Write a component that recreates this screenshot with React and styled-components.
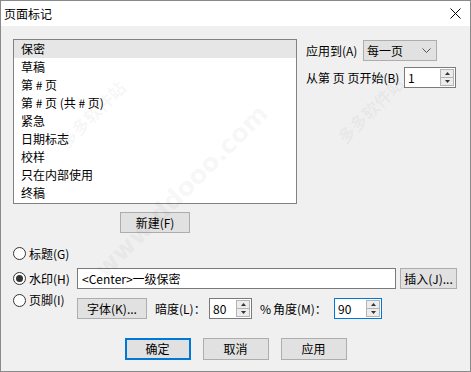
import React from 'react';
import styled, { createGlobalStyle } from 'styled-components';

const Global = createGlobalStyle`
  html, body { margin: 0; padding: 0; background: #ffffff; }
  body {
    font-family: "Noto Sans CJK SC", "Microsoft YaHei", sans-serif;
    font-size: 12px;
    color: #000;
  }
  * { box-sizing: border-box; }
`;

const Window = styled.div`
  position: relative;
  width: 471px;
  height: 372px;
  border: 1px solid #8a8a8a;
  background: #f0f0f0;
  display: flex;
  flex-direction: column;
  overflow: hidden;
`;

const TitleBar = styled.div`
  height: 25px;
  flex: none;
  background: #ffffff;
  display: flex;
  align-items: center;
  justify-content: space-between;
  padding: 0 9px 0 3px;
  font-size: 12px;
  line-height: 16px;
`;

const Body = styled.div`
  flex: 1;
  display: flex;
  flex-direction: column;
  padding: 13px 12px 0 12px;
`;

const Top = styled.div`
  display: flex;
  align-items: flex-start;
`;

const ListBox = styled.div`
  width: 284px;
  height: 165px;
  border: 1px solid #828282;
  background: #ffffff;
`;

const ListItem = styled.div`
  height: 18px;
  line-height: 18px;
  padding-left: 7px;
  background: ${p => (p.$selected ? '#e6e6e6' : 'transparent')};
  white-space: nowrap;
`;

const RightCol = styled.div`
  margin-left: 9px;
  padding-top: 1px;
  display: flex;
  flex-direction: column;
  gap: 6px;
`;

const FormRow = styled.div`
  display: flex;
  align-items: center;
  height: 21px;
`;

const FieldLabel = styled.span`
  width: ${p => p.$w}px;
  margin-left: ${p => p.$ml || 0}px;
  flex: none;
  white-space: nowrap;
  line-height: 16px;
`;

const Select = styled.div`
  width: ${p => p.$w}px;
  height: 21px;
  border: 1px solid #adadad;
  background: #e1e1e1;
  display: flex;
  align-items: center;
  justify-content: space-between;
  padding: 0 5px 0 3px;
  line-height: 16px;
`;

const SpinBox = styled.div`
  width: ${p => p.$w}px;
  height: 21px;
  flex: none;
  border: 1px solid ${p => (p.$focused ? '#0078d7' : '#7a7a7a')};
  background: #ffffff;
  display: flex;
`;

const SpinValue = styled.div`
  flex: 1;
  padding-left: 3px;
  line-height: 19px;
`;

const SpinButtons = styled.div`
  width: 15px;
  flex: none;
  padding: 1px 1px 1px 0;
  display: flex;
  flex-direction: column;
`;

const SpinHalf = styled.div`
  flex: 1;
  border: 1px solid #b4b4b4;
  border-top-width: ${p => (p.$down ? 0 : 1)}px;
  background: #ececec;
  display: flex;
  align-items: center;
  justify-content: center;
`;

const Button = styled.button`
  width: ${p => p.$w}px;
  height: ${p => p.$h || 21}px;
  flex: none;
  margin-left: ${p => p.$ml || 0}px;
  border: ${p => (p.$default ? '2px solid #0078d7' : '1px solid #adadad')};
  background: #e1e1e1;
  font-family: inherit;
  font-size: 12px;
  line-height: 16px;
  color: #000;
  padding: 0;
  display: flex;
  align-items: center;
  justify-content: center;
`;

const NewRow = styled.div`
  width: 284px;
  margin-top: 8px;
  display: flex;
  justify-content: center;
`;

const RadioSection = styled.div`
  margin-top: 10px;
  display: flex;
  flex-direction: column;
  gap: 4px;
`;

const RadioRow = styled.div`
  display: flex;
  align-items: ${p => (p.$top ? 'flex-start' : 'center')};
  min-height: 21px;
`;

const RadioLabel = styled.label`
  width: 64px;
  flex: none;
  display: flex;
  align-items: center;
  gap: 3px;
  line-height: 14px;
  white-space: nowrap;
`;

const RadioCircle = styled.span`
  width: 13px;
  height: 13px;
  border-radius: 50%;
  border: 1px solid #333333;
  background: #ffffff;
  display: flex;
  align-items: center;
  justify-content: center;
  flex: none;
  &::after {
    content: '';
    width: 7px;
    height: 7px;
    border-radius: 50%;
    background: ${p => (p.$checked ? '#333333' : 'transparent')};
  }
`;

const TextInput = styled.div`
  width: 319px;
  height: 21px;
  border: 1px solid #7a7a7a;
  background: #ffffff;
  padding-left: 4px;
  line-height: 19px;
  white-space: nowrap;
`;

const Controls = styled.div`
  display: flex;
  align-items: center;
  margin-top: 5px;
`;

const Footer = styled.div`
  margin-top: 19px;
  display: flex;
  justify-content: center;
  gap: 12px;
`;

const Watermark = styled.div`
  position: absolute;
  left: ${p => p.$x}px;
  top: ${p => p.$y}px;
  transform: rotate(-45deg);
  transform-origin: left top;
  color: rgba(0, 0, 0, 0.055);
  font-family: ${p => (p.$latin ? '"DejaVu Sans", sans-serif' : '"Noto Sans CJK SC", sans-serif')};
  font-weight: bold;
  font-size: ${p => p.$size}px;
  white-space: nowrap;
  pointer-events: none;
`;

const CloseIcon = () => (
  <svg width="11" height="11" viewBox="0 0 11 11">
    <path d="M0.5 0.5 L10.5 10.5 M10.5 0.5 L0.5 10.5" stroke="#000" strokeWidth="1" fill="none" />
  </svg>
);

const Chevron = () => (
  <svg width="9" height="5" viewBox="0 0 9 5">
    <path d="M0.5 0.5 L4.5 4.5 L8.5 0.5" stroke="#555" strokeWidth="1" fill="none" />
  </svg>
);

const Arrow = ({ down }) => (
  <svg width="5" height="3" viewBox="0 0 5 3">
    <path d={down ? 'M0 0 L5 0 L2.5 3 Z' : 'M0 3 L5 3 L2.5 0 Z'} fill="#333" />
  </svg>
);

const Spin = ({ w, value, focused }) => (
  <SpinBox $w={w} $focused={focused}>
    <SpinValue>{value}</SpinValue>
    <SpinButtons>
      <SpinHalf><Arrow /></SpinHalf>
      <SpinHalf $down><Arrow down /></SpinHalf>
    </SpinButtons>
  </SpinBox>
);

const Radio = ({ checked, children }) => (
  <RadioLabel>
    <RadioCircle $checked={checked} />
    <span>{children}</span>
  </RadioLabel>
);

const items = ['保密', '草稿', '第 # 页', '第 # 页 (共 # 页)', '紧急', '日期标志', '校样', '只在内部使用', '终稿'];

export default function App() {
  return (
    <>
      <Global />
      <Window>
        <TitleBar>
          <span>页面标记</span>
          <CloseIcon />
        </TitleBar>
        <Body>
          <Top>
            <ListBox>
              {items.map((t, i) => (
                <ListItem key={t} $selected={i === 0}>{t}</ListItem>
              ))}
            </ListBox>
            <RightCol>
              <FormRow>
                <FieldLabel $w={57}>应用到(A)</FieldLabel>
                <Select $w={74}>
                  <span>每一页</span>
                  <Chevron />
                </Select>
              </FormRow>
              <FormRow>
                <FieldLabel $w={98}>从第 页 页开始(B)</FieldLabel>
                <Spin w={52} value="1" />
              </FormRow>
            </RightCol>
          </Top>
          <NewRow>
            <Button $w={70}>新建(F)</Button>
          </NewRow>
          <RadioSection>
            <RadioRow>
              <Radio>标题(G)</Radio>
            </RadioRow>
            <RadioRow>
              <Radio checked>水印(H)</Radio>
              <TextInput>&lt;Center&gt;一级保密</TextInput>
              <Button $w={57} $ml={4}>插入(J)...</Button>
            </RadioRow>
            <RadioRow $top>
              <Radio>页脚(I)</Radio>
              <Controls>
                <Button $w={70}>字体(K)...</Button>
                <FieldLabel $w={54} $ml={8}>暗度(L)：</FieldLabel>
                <Spin w={43} value="80" />
                <FieldLabel $w={13} $ml={8}>%</FieldLabel>
                <FieldLabel $w={61}>角度(M)：</FieldLabel>
                <Spin w={48} value="90" focused />
              </Controls>
            </RadioRow>
          </RadioSection>
          <Footer>
            <Button $w={66} $h={22} $default>确定</Button>
            <Button $w={66} $h={22}>取消</Button>
            <Button $w={66} $h={22}>应用</Button>
          </Footer>
        </Body>
        <Watermark $x={88} $y={262} $size={25} $latin>www.ddooo.com</Watermark>
        <Watermark $x={52} $y={134} $size={17}>多多软件站</Watermark>
        <Watermark $x={330} $y={130} $size={17}>多多软件站</Watermark>
      </Window>
    </>
  );
}
